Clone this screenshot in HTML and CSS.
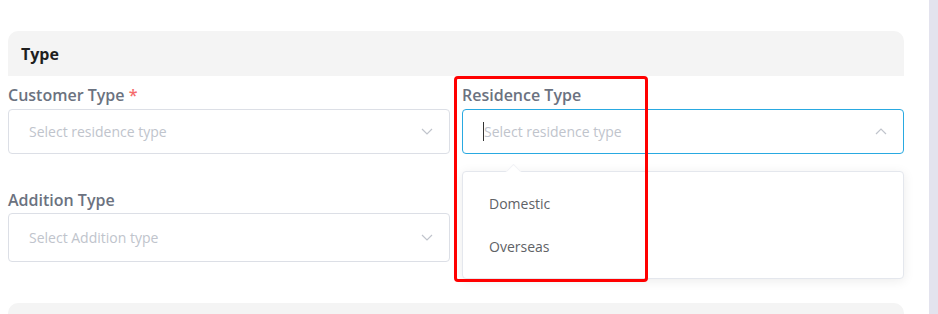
FILE: index.html
```html
<!DOCTYPE html>
<html lang="en">
<head>
  <meta charset="UTF-8">
  <title>Type</title>
  <link rel="stylesheet" href="styles.css">
</head>
<body>
  <div class="page">
    <div class="main">
      <div class="section">
        <div class="section-header">Type</div>
        <div class="form-grid">
          <div class="field">
            <label class="field-label">Customer Type <span class="required">*</span></label>
            <div class="select">
              <span class="placeholder">Select residence type</span>
              <svg class="chevron" viewBox="0 0 12 7" width="12" height="7"><path d="M1 1l5 5 5-5" fill="none" stroke="currentColor" stroke-width="1.2"/></svg>
            </div>
          </div>
          <div class="field">
            <label class="field-label">Residence Type</label>
            <div class="select is-focus">
              <span class="caret"></span>
              <span class="placeholder">Select residence type</span>
              <svg class="chevron" viewBox="0 0 12 7" width="12" height="7"><path d="M1 6l5-5 5 5" fill="none" stroke="currentColor" stroke-width="1.2"/></svg>
            </div>
            <div class="dropdown">
              <span class="dropdown-arrow"></span>
              <ul class="options">
                <li>Domestic</li>
                <li>Overseas</li>
              </ul>
            </div>
          </div>
          <div class="field field-second">
            <label class="field-label">Addition Type</label>
            <div class="select select-tall">
              <span class="placeholder">Select Addition type</span>
              <svg class="chevron" viewBox="0 0 12 7" width="12" height="7"><path d="M1 1l5 5 5-5" fill="none" stroke="currentColor" stroke-width="1.2"/></svg>
            </div>
          </div>
        </div>
      </div>
      <div class="section-header section-next"></div>
      <div class="highlight"></div>
    </div>
    <div class="scrollbar"></div>
  </div>
</body>
</html>
```

FILE: styles.css
```css
body {
  margin: 0;
  font-family: "Open Sans", "Noto Sans", Arial, sans-serif;
  background: #fff;
  overflow: hidden;
}
.page {
  display: flex;
  height: 314px;
  overflow: hidden;
}
.main {
  position: relative;
  flex: 1;
  padding: 31px 25px 0 8px;
}
.scrollbar {
  width: 9px;
  background: #e3e3ee;
}
.section-header {
  height: 45px;
  padding-left: 13px;
  display: flex;
  align-items: center;
  background: #f4f4f4;
  border-radius: 10px 10px 0 0;
  font-size: 16px;
  font-weight: 700;
  color: #1f1f1f;
}
.section-next {
  margin-top: 41px;
}
.form-grid {
  display: grid;
  grid-template-columns: 1fr 1fr;
  column-gap: 12px;
}
.field {
  position: relative;
  display: flex;
  flex-direction: column;
}
.field-label {
  margin-top: 7px;
  height: 24px;
  line-height: 24px;
  font-size: 16px;
  font-weight: 600;
  color: #6b7280;
}
.required {
  color: #f56c6c;
}
.field-second .field-label {
  margin-top: 34px;
}
.select {
  margin-top: 2px;
  height: 45px;
  box-sizing: border-box;
  display: flex;
  align-items: center;
  padding: 0 16px 0 20px;
  border: 1px solid #dcdfe6;
  border-radius: 4px;
  color: #c0c4cc;
}
.select-tall {
  height: 49px;
  margin-top: 1px;
}
.is-focus {
  border-color: #29a9e1;
}
.placeholder {
  flex: 1;
  font-size: 14px;
}
.caret {
  width: 1px;
  height: 19px;
  background: #333;
}
.chevron {
  color: #c0c4cc;
}
.dropdown {
  position: absolute;
  top: 95px;
  left: 0;
  right: 0;
  z-index: 2;
  background: #fff;
  border: 1px solid #e4e7ed;
  border-radius: 4px;
  box-shadow: 0 2px 12px rgba(0, 0, 0, 0.08);
}
.dropdown-arrow {
  position: absolute;
  top: -6px;
  left: 45px;
  width: 10px;
  height: 10px;
  background: #fff;
  border-top: 1px solid #f2f3f6;
  border-left: 1px solid #f2f3f6;
  transform: rotate(45deg);
}
.options {
  list-style: none;
  margin: 0;
  padding: 10px 0;
}
.options li {
  height: 43px;
  line-height: 43px;
  padding-left: 26px;
  font-size: 14px;
  color: #606266;
}
.highlight {
  position: absolute;
  top: 76px;
  left: 454px;
  width: 188px;
  height: 200px;
  border: 3px solid #ff0000;
  border-radius: 4px;
  z-index: 3;
}
```
